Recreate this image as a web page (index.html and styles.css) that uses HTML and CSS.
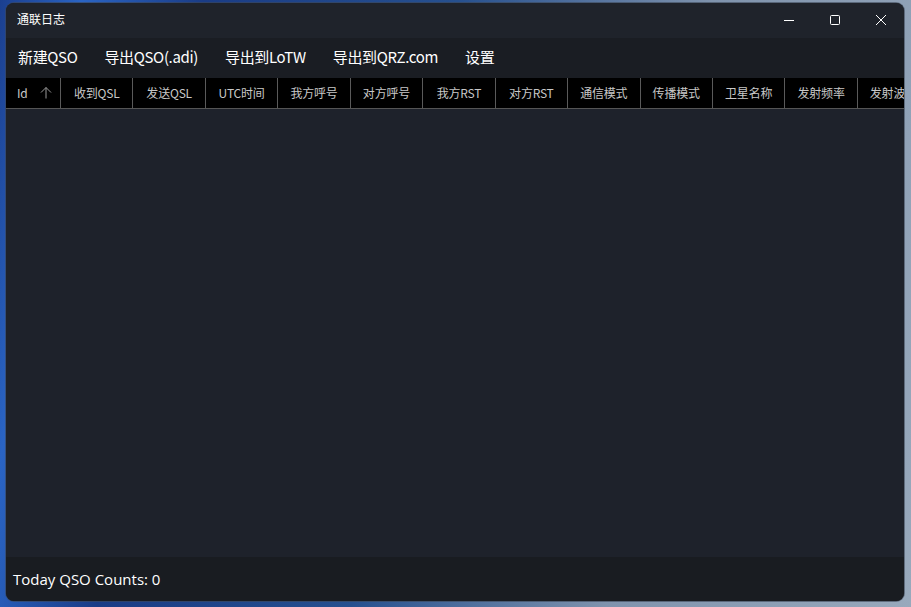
FILE: index.html
```html
<!DOCTYPE html>
<html lang="zh">
<head>
<meta charset="utf-8">
<title>通联日志</title>
<link rel="stylesheet" href="styles.css">
</head>
<body>
<div class="window">
  <div class="titlebar">
    <span class="title">通联日志</span>
    <div class="controls">
      <span class="ctl"><svg width="12" height="12" viewBox="0 0 12 12"><path d="M1 6.5h10" stroke="#fff" stroke-width="1"/></svg></span>
      <span class="ctl"><svg width="12" height="12" viewBox="0 0 12 12"><rect x="1.5" y="1.5" width="9" height="9" rx="1" fill="none" stroke="#fff" stroke-width="1"/></svg></span>
      <span class="ctl"><svg width="12" height="12" viewBox="0 0 12 12"><path d="M1 1L11 11M11 1L1 11" stroke="#fff" stroke-width="1"/></svg></span>
    </div>
  </div>
  <div class="menubar">
    <span class="menu">新建QSO</span>
    <span class="menu">导出QSO(.adi)</span>
    <span class="menu">导出到LoTW</span>
    <span class="menu">导出到QRZ.com</span>
    <span class="menu">设置</span>
  </div>
  <div class="grid">
    <div class="head">
      <div class="col col-id">Id <svg class="sort" width="12" height="13" viewBox="0 0 12 13"><path d="M6 1.5V12.5M1 6.5L6 1.5L11 6.5" fill="none" stroke="#9a9a9a" stroke-width="1"/></svg></div>
      <div class="col">收到QSL</div>
      <div class="col">发送QSL</div>
      <div class="col">UTC时间</div>
      <div class="col">我方呼号</div>
      <div class="col">对方呼号</div>
      <div class="col">我方RST</div>
      <div class="col">对方RST</div>
      <div class="col">通信模式</div>
      <div class="col">传播模式</div>
      <div class="col">卫星名称</div>
      <div class="col">发射频率</div>
      <div class="col col-last">发射波段</div>
    </div>
    <div class="body"></div>
  </div>
  <div class="footer">Today QSO Counts: 0</div>
</div>
</body>
</html>
```

FILE: styles.css
```css
html, body {
  margin: 0;
  padding: 0;
}
body {
  width: 911px;
  height: 607px;
  overflow: hidden;
  background:
    linear-gradient(100deg, #1b3f8f 0%, #2a64c4 8%, #1a3c86 20%, #26508f 45%, #7f93ad 70%, #98a9bc 100%);
  font-family: "Noto Sans CJK SC", "Noto Sans", sans-serif;
}
.window {
  margin: 3px 0 0 6px;
  width: 898px;
  height: 598px;
  border-radius: 8px;
  overflow: hidden;
  background: #1e222b;
  display: flex;
  flex-direction: column;
  box-shadow: 0 0 0 1px rgba(60, 70, 85, 0.6);
}
.titlebar {
  height: 35px;
  flex: none;
  background: #1f232b;
  display: flex;
  align-items: center;
  justify-content: space-between;
}
.title {
  color: #fff;
  font-size: 12px;
  padding-left: 11px;
  padding-bottom: 5px;
}
.controls {
  display: flex;
  height: 100%;
  padding-bottom: 2px;
  box-sizing: border-box;
}
.ctl {
  width: 46px;
  display: flex;
  align-items: center;
  justify-content: center;
}
.menubar {
  height: 40px;
  flex: none;
  background: #1a1d23;
  display: flex;
  align-items: center;
  padding-bottom: 3px;
  box-sizing: border-box;
}
.menu {
  color: #fff;
  font-size: 15px;
  padding: 0 15px 0 12px;
  letter-spacing: -0.35px;
}
.grid {
  flex: 1;
  display: flex;
  flex-direction: column;
  min-height: 0;
}
.head {
  height: 30px;
  flex: none;
  background: #000;
  border-bottom: 1px solid #555;
  display: flex;
  overflow: hidden;
}
.col {
  flex: none;
  width: 72.45px;
  border-right: 1px solid #5a5a5a;
  color: #c8c8c8;
  font-size: 12px;
  letter-spacing: -0.2px;
  display: flex;
  align-items: center;
  justify-content: center;
  box-sizing: border-box;
  padding-bottom: 1px;
  white-space: nowrap;
}
.col-id {
  width: 55px;
  justify-content: flex-start;
  padding-left: 11px;
}
.col-id .sort {
  margin-left: 12px;
}
.col-last {
  border-right: none;
  justify-content: flex-start;
  padding-left: 12px;
}
.body {
  flex: 1;
  background: #1e222b;
}
.footer {
  height: 44px;
  flex: none;
  background: #191c21;
  color: #fff;
  font-family: "Open Sans", "Noto Sans", sans-serif;
  font-size: 15px;
  display: flex;
  align-items: center;
  padding-left: 7px;
}
```
